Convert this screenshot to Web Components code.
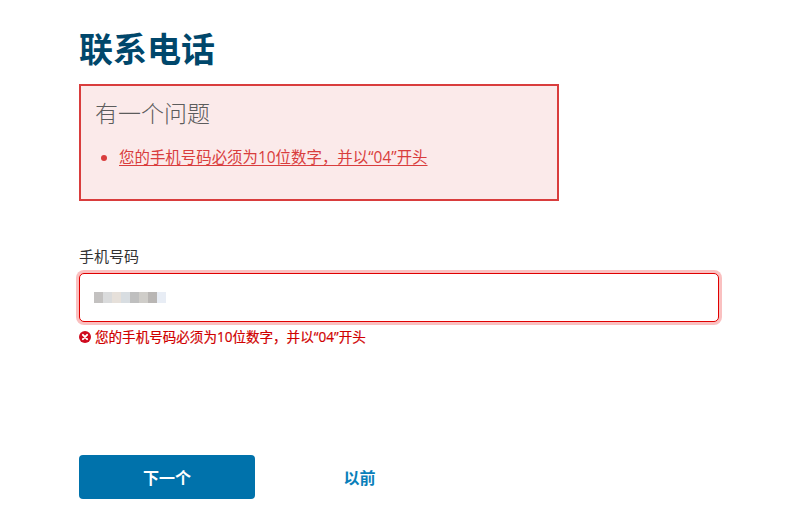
<!DOCTYPE html>
<html lang="zh-CN"><head><meta charset="utf-8">
<style>
html,body{margin:0;background:#fff;}
body{font-family:"Open Sans","Noto Sans CJK SC",sans-serif;color:#333;overflow:hidden;height:530px;}
</style></head><body>
<contact-page>
  <span slot="title">联系电话</span>
  <error-summary slot="summary" heading="有一个问题">您的手机号码必须为10位数字，并以“04”开头</error-summary>
  <phone-field slot="field" label="手机号码" error="您的手机号码必须为10位数字，并以“04”开头"></phone-field>
  <nav-actions slot="actions" next="下一个" prev="以前"></nav-actions>
</contact-page>
<script>
function def(name, html){
  customElements.define(name, class extends HTMLElement{
    connectedCallback(){
      if(this.shadowRoot) return;
      const r=this.attachShadow({mode:'open'});
      r.innerHTML=typeof html==='function'?html(this):html;
    }
  });
}
def('contact-page',`<style>
:host{display:flex;flex-direction:column;width:640px;margin-left:79px;padding-top:26px;}
h1{margin:0 0 12px;font-size:34px;line-height:46px;font-weight:700;color:#00476b;}
.sum{display:block;width:480px;margin-bottom:44px}
.act{display:block;margin-top:109px}
</style>
<h1><slot name="title"></slot></h1>
<div class="sum"><slot name="summary"></slot></div>
<slot name="field"></slot>
<div class="act"><slot name="actions"></slot></div>`);
def('error-summary',h=>`<style>
:host{display:block;box-sizing:border-box;height:117px;border:2px solid #d93d3d;background:#fbeaea;padding:11px 15px;}
h2{margin:0 0 0 -1px;font-size:23px;line-height:32px;font-weight:300;color:#5c5c5c;}
ul{margin:17px 0 0;padding:0 0 0 23px;color:#d93d3d;font-size:15.45px;line-height:22px;}
a{color:#d93d3d;text-decoration:underline;text-underline-offset:2px;}
</style>
<h2>${h.getAttribute('heading')}</h2>
<ul><li><a href="#"><slot></slot></a></li></ul>`);
def('masked-value',`<style>
:host{display:flex;height:11px;}
i{display:block;width:9px;height:11px;}
</style>
${['#c3c1c0','#dadbdc','#e6e0da','#d8dde1','#bfbfbf','#cfcdc9','#b9b6b4','#e8edf5'].map(c=>`<i style="background:${c}"></i>`).join('')}`);
def('phone-field',h=>`<style>
:host{display:block;}
label{display:block;font-size:15px;line-height:22px;color:#333;margin-bottom:6px;}
.box{box-sizing:border-box;height:49px;border:1.5px solid #e00000;border-radius:5px;box-shadow:0 0 0 3px #fac0c0;background:#fff;display:flex;align-items:center;padding-left:14px;}
.err{display:flex;align-items:center;gap:4px;margin-top:6px;font-size:13.55px;line-height:18px;color:#d00000;-webkit-text-stroke:.2px #d00000;}
svg{flex:none;display:block}
</style>
<label>${h.getAttribute('label')}</label>
<div class="box"><masked-value></masked-value></div>
<div class="err"><svg width="12" height="12" viewBox="0 0 12 12"><circle cx="6" cy="6" r="6" fill="#cf0a1e"/><path d="M3.9 3.9l4.2 4.2M8.1 3.9l-4.2 4.2" stroke="#fff" stroke-width="2" stroke-linecap="round"/></svg><span>${h.getAttribute('error')}</span></div>`);
def('nav-actions',h=>`<style>
:host{display:flex;align-items:center;}
.n{display:flex;align-items:center;justify-content:center;width:176px;height:44px;background:#0072ab;color:#fff;border-radius:4px;font-size:16px;font-weight:700;}
.p{display:flex;align-items:center;justify-content:center;width:209px;height:44px;color:#0a7fba;font-size:16px;font-weight:700;}
</style>
<div class="n">${h.getAttribute('next')}</div><div class="p">${h.getAttribute('prev')}</div>`);
</script>
</body></html>
